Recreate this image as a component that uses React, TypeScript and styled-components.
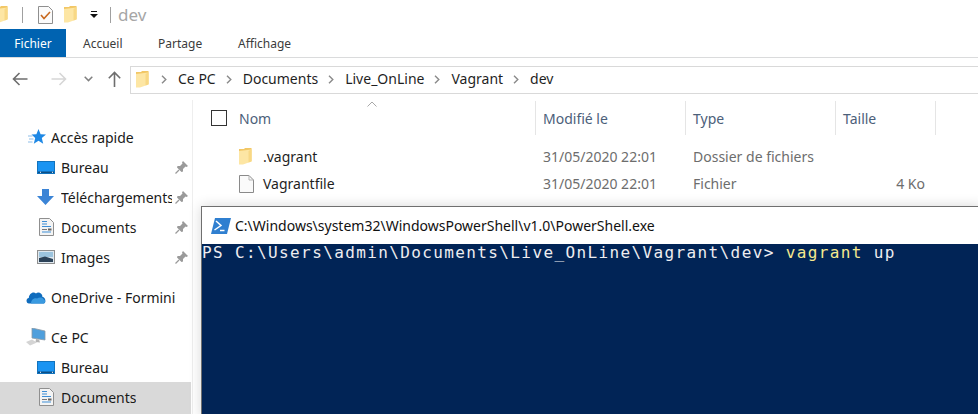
import React from "react";
import styled, { createGlobalStyle } from "styled-components";

const Global = createGlobalStyle`
  html, body { margin: 0; padding: 0; background: #fff; }
  * { box-sizing: border-box; }
`;

const Page = styled.div`
  position: relative;
  width: 978px;
  height: 414px;
  overflow: hidden;
  background: #fff;
  font-family: "Noto Sans", "Open Sans", sans-serif;
  font-size: 14px;
  color: #1a1a1a;
  white-space: nowrap;
`;

/* ---------- title bar ---------- */
const TitleBar = styled.div`
  height: 29px;
  display: flex;
  align-items: center;
  margin-left: -5px;
`;
const TitleSep = styled.span<{ $ml: number }>`
  width: 1px;
  height: 16px;
  background: #a0a0a0;
  margin-left: ${(p) => p.$ml}px;
`;
const QuickSlot = styled.span<{ $ml: number }>`
  display: flex;
  margin-left: ${(p) => p.$ml}px;
`;
const TitleText = styled.span`
  margin-left: 7px;
  font-size: 17px;
  line-height: 20px;
  color: #a6a6a6;
`;

/* ---------- ribbon ---------- */
const Ribbon = styled.div`
  height: 29px;
  display: flex;
  align-items: stretch;
  border-bottom: 1px solid #dadbdc;
  font-size: 12px;
  color: #3b3b3b;
`;
const FileTab = styled.div`
  width: 66px;
  background: #0063b1;
  color: #fff;
  display: flex;
  align-items: center;
  justify-content: center;
`;
const RibbonTab = styled.div<{ $w: number }>`
  width: ${(p) => p.$w}px;
  padding-left: 17px;
  display: flex;
  align-items: center;
`;

/* ---------- navigation ---------- */
const NavRow = styled.div`
  height: 42px;
  display: flex;
  align-items: center;
  padding-left: 12px;
`;
const NavSlot = styled.span<{ $w: number }>`
  width: ${(p) => p.$w}px;
  display: flex;
`;
const AddressBar = styled.div`
  flex: 1;
  height: 28px;
  margin-top: 1px;
  border: 1px solid #d9d9d9;
  border-right: 0;
  display: flex;
  align-items: center;
  padding-left: 5px;
  font-size: 14px;
  color: #1f1f1f;
`;
const Crumb = styled.span`
  margin: 0 10px 2px 11px;
`;
const Chevron = styled.span<{ $ml?: number }>`
  display: flex;
  margin-left: ${(p) => p.$ml ?? 0}px;
`;

/* ---------- body ---------- */
const Body = styled.div`
  display: grid;
  grid-template-columns: 192px 1fr;
`;
const Sidebar = styled.nav`
  padding-top: 22px;
  display: flex;
  flex-direction: column;
  height: 314px;
`;
const NavItem = styled.div<{ $indent: number; $gap?: number; $selected?: boolean }>`
  height: ${(p) => (p.$selected ? 32 : 30)}px;
  flex: none;
  width: 191px;
  margin-top: ${(p) => p.$gap ?? 0}px;
  display: flex;
  align-items: center;
  padding-left: ${(p) => p.$indent}px;
  padding-bottom: ${(p) => (p.$selected ? 2 : 0)}px;
  background: ${(p) => (p.$selected ? "#d9d9d9" : "transparent")};
`;
const NavIcon = styled.span<{ $w: number }>`
  width: ${(p) => p.$w}px;
  flex: none;
  display: flex;
`;
const NavLabel = styled.span<{ $pinned?: boolean }>`
  overflow: hidden;
  width: ${(p) => (p.$pinned ? "111px" : "auto")};
  flex: none;
`;
const Pin = styled.span`
  margin-left: 3px;
  display: flex;
`;

const Main = styled.main`
  border-left: 1px solid #eeeeee;
`;
const Columns = "343px 150px 150px 100px 1fr";
const Header = styled.div`
  display: grid;
  grid-template-columns: ${Columns};
  height: 34px;
  margin-top: 1px;
  color: #4c607a;
  position: relative;
`;
const HeaderCell = styled.div<{ $first?: boolean }>`
  display: flex;
  align-items: center;
  padding-left: ${(p) => (p.$first ? 18 : 7)}px;
  border-right: 1px solid #e5e5e5;
`;
const CheckBox = styled.span`
  width: 16px;
  height: 16px;
  border: 1px solid #333;
  margin-right: 12px;
`;
const SortCaret = styled.span`
  position: absolute;
  left: 174px;
  top: 0;
  display: flex;
`;
const FileRow = styled.div<{ $top: number }>`
  display: grid;
  grid-template-columns: ${Columns};
  height: 27px;
  align-items: center;
  margin-top: ${(p) => p.$top}px;
  color: #6d6d6d;
`;
const NameCell = styled.div`
  display: flex;
  align-items: center;
  padding-left: 46px;
  color: #1f1f1f;
`;
const NameIcon = styled.span`
  width: 24px;
  display: flex;
`;
const DataCell = styled.div`
  padding-left: 7px;
`;
const SizeCell = styled.div`
  text-align: right;
  padding-right: 11px;
`;

/* ---------- PowerShell window ---------- */
const ConsoleWindow = styled.section`
  position: absolute;
  left: 201px;
  top: 206px;
  right: -4px;
  bottom: -4px;
  border: 1px solid #6f6f6f;
  box-shadow: 0 0 12px rgba(0, 0, 0, 0.16);
  background: #fff;
`;
const ConsoleTitle = styled.div`
  height: 37px;
  display: flex;
  align-items: center;
  padding-left: 9px;
  gap: 4px;
  font-size: 14px;
  color: #111;
`;
const ConsoleBody = styled.div`
  height: 170px;
  background: #012456;
  color: #eeedf0;
  font-family: "DejaVu Sans Mono", "Liberation Mono", monospace;
  font-size: 16px;
  letter-spacing: 1.38px;
  line-height: 18px;
`;
const Command = styled.span`
  color: #f5e98f;
`;

/* ---------- drawings ---------- */
const FolderIcon = () => (
  <svg width="13" height="17" viewBox="0 0 13 17">
    <path d="M0 1 L5 1 L6 0 L12.5 0 L12.5 13 L0 13 Z" fill="#f2c766" />
    <path d="M0 3 L12.5 1.5 L12.5 13.5 L4 16.5 L0 16.5 Z" fill="#fde6a4" />
    <path d="M12.5 1 L12.5 13.5 L9.5 14.5 L9.5 3 Z" fill="#f8d885" />
  </svg>
);
const CheckDoc = () => (
  <svg width="15" height="18" viewBox="0 0 15 18">
    <path d="M.5.5 H10.5 L14.5 4.5 V17.5 H.5 Z" fill="#fbfbfb" stroke="#8f8f8f" />
    <path d="M3 9 L6 12.5 L12 6" fill="none" stroke="#c8691f" strokeWidth="1.6" />
  </svg>
);
const Dropdown = () => (
  <svg width="8" height="7" viewBox="0 0 8 7">
    <rect x="1" y="0" width="6" height="1" fill="#111" />
    <path d="M0 3 H8 L4 7 Z" fill="#111" />
  </svg>
);
const ArrowLeft = () => (
  <svg width="16" height="14" viewBox="0 0 16 14">
    <path d="M15.5 7 H1.5 M7.5 1 L1.5 7 L7.5 13" fill="none" stroke="#6e6e6e" strokeWidth="1.6" />
  </svg>
);
const ArrowRight = () => (
  <svg width="16" height="14" viewBox="0 0 16 14">
    <path d="M.5 7 H14.5 M8.5 1 L14.5 7 L8.5 13" fill="none" stroke="#d6d6d6" strokeWidth="1.6" />
  </svg>
);
const SmallDown = () => (
  <svg width="9" height="6" viewBox="0 0 9 6">
    <path d="M.7 .8 L4.5 4.6 L8.3 .8" fill="none" stroke="#808080" strokeWidth="1.5" />
  </svg>
);
const ArrowUp = () => (
  <svg width="13" height="16" viewBox="0 0 13 16">
    <path d="M6.5 16 V1.5 M.8 7.2 L6.5 1.5 L12.2 7.2" fill="none" stroke="#6e6e6e" strokeWidth="1.6" />
  </svg>
);
const CrumbChevron = () => (
  <svg width="6" height="9" viewBox="0 0 6 9">
    <path d="M1 .8 L4.8 4.5 L1 8.2" fill="none" stroke="#8a8a8a" strokeWidth="1.4" />
  </svg>
);
const StarIcon = () => (
  <svg width="18" height="16" viewBox="0 0 18 16">
    <path d="M10.5 0 L12.6 5.2 L18 5.6 L13.8 9.1 L15.2 14.7 L10.5 11.7 L5.8 14.7 L7.2 9.1 L3.5 5.6 L8.4 5.2 Z" fill="#1e88e5" />
    <path d="M0 7 H4.5 M1 10 H5.5 M0 13 H4.5" stroke="#8dbde8" strokeWidth="1" />
  </svg>
);
const DesktopIcon = () => (
  <svg width="18" height="13" viewBox="0 0 18 13">
    <rect x=".5" y=".5" width="17" height="12" fill="#1a94f2" stroke="#1273bd" />
    <rect x="1" y="10.5" width="16" height="1.5" fill="#0d4f86" />
    <rect x="3" y="10.8" width="1" height="1" fill="#fff" />
    <rect x="15" y="10.8" width="1" height="1" fill="#fff" />
  </svg>
);
const DownloadIcon = () => (
  <svg width="17" height="16" viewBox="0 0 17 16">
    <path d="M5 0 H12 V7 H17 L8.5 16 L0 7 H5 Z" fill="#3b84d6" />
  </svg>
);
const DocSvg = styled.svg`
  margin-left: 2px;
`;
const DocIcon = () => (
  <DocSvg width="15" height="18" viewBox="0 0 15 18">
    <path d="M.5.5 H10.5 L14.5 4.5 V17.5 H.5 Z" fill="#f4f4f4" stroke="#8f8f8f" />
    <path d="M3 3.5 H8 M3 6 H8 M3 8.5 H12 M3 14 H12" stroke="#3f8fd6" strokeWidth="1" />
    <path d="M3 11.5 H8" stroke="#777" strokeWidth="1" />
    <rect x="9" y="10.5" width="3.5" height="2" fill="#666" />
  </DocSvg>
);
const ImageIcon = () => (
  <svg width="18" height="14" viewBox="0 0 18 14">
    <rect x=".5" y=".5" width="17" height="13" fill="#dfe8ef" stroke="#8f8f8f" />
    <rect x="2" y="2" width="14" height="5" fill="#9cc4de" />
    <path d="M2 8 L8 6.5 L16 9 V12 H2 Z" fill="#2c4258" />
  </svg>
);
const PinIcon = () => (
  <svg width="13" height="13" viewBox="0 0 13 13">
    <path d="M8 0 L13 5 L11.5 6 L10.5 5.5 L8 8 L8 10.5 L6.5 11 L2 6.5 L2.5 5 L5 5 L7.5 2.5 L7 1.5 Z" fill="#9a9a9a" />
    <path d="M4 9 L0.5 12.5" stroke="#9a9a9a" strokeWidth="1.3" />
  </svg>
);
const CloudIcon = () => (
  <svg width="20" height="13" viewBox="0 0 20 13">
    <path d="M3 12.5 C0 12.5 -.5 7.5 2.8 7 C3 3 7 0 10 2.5 C12 0.5 16.5 2 16.5 6 C19.5 6 21 12.5 17 12.5 Z" fill="#0f6cbd" />
    <path d="M5 12.5 C5 9 8 6.5 11 7.5 C13 6 17 6 17.5 8.2 C19.8 8.8 19.5 12.5 17 12.5 Z" fill="#3a9ae0" />
  </svg>
);
const PcIcon = () => (
  <svg width="20" height="18" viewBox="0 0 20 18">
    <path d="M6 0 L19 3 V12 L6 10 Z" fill="#4f9fdc" stroke="#8c9aa6" strokeWidth=".8" />
    <path d="M13 11.5 L14 14.5 L9.5 14 L10 11 Z" fill="#b5b5b5" />
    <path d="M0 14 L6 11.5 L11 14.5 L4 17.5 Z" fill="#d4d4d4" />
  </svg>
);
const BlankFile = () => (
  <svg width="15" height="18" viewBox="0 0 15 18">
    <path d="M.5.5 H10 L14.5 5 V17.5 H.5 Z" fill="#fafafa" stroke="#8a8a8a" />
    <path d="M10 .5 V5 H14.5" fill="none" stroke="#b5b5b5" />
  </svg>
);
const Caret = () => (
  <svg width="10" height="6" viewBox="0 0 10 6">
    <path d="M.5 5.5 L5 1 L9.5 5.5" fill="none" stroke="#a8a8a8" />
  </svg>
);
const PsIcon = () => (
  <svg width="20" height="16" viewBox="0 0 20 16">
    <path d="M4 0 H20 L16 16 H0 Z" fill="#2f7fd0" />
    <path d="M5 3 L10 7.5 L3.5 12" fill="none" stroke="#fff" strokeWidth="1.5" />
    <path d="M9 12.5 H13.5" stroke="#fff" strokeWidth="1.5" />
  </svg>
);

const quick: [string, React.ReactNode][] = [
  ["Bureau", <DesktopIcon />],
  ["Téléchargements", <DownloadIcon />],
  ["Documents", <DocIcon />],
  ["Images", <ImageIcon />],
];
const crumbs = ["Ce PC", "Documents", "Live_OnLine", "Vagrant", "dev"];

export default function App() {
  return (
    <Page>
      <Global />
      <TitleBar>
        <FolderIcon />
        <TitleSep $ml={14} />
        <QuickSlot $ml={15}><CheckDoc /></QuickSlot>
        <QuickSlot $ml={11}><FolderIcon /></QuickSlot>
        <QuickSlot $ml={13}><Dropdown /></QuickSlot>
        <TitleSep $ml={12} />
        <TitleText>dev</TitleText>
      </TitleBar>
      <Ribbon>
        <FileTab>Fichier</FileTab>
        <RibbonTab $w={75}>Accueil</RibbonTab>
        <RibbonTab $w={80}>Partage</RibbonTab>
        <RibbonTab $w={90}>Affichage</RibbonTab>
      </Ribbon>
      <NavRow>
        <NavSlot $w={39}><ArrowLeft /></NavSlot>
        <NavSlot $w={33}><ArrowRight /></NavSlot>
        <NavSlot $w={24}><SmallDown /></NavSlot>
        <NavSlot $w={22}><ArrowUp /></NavSlot>
        <AddressBar>
          <FolderIcon />
          {crumbs.map((c, i) => (
            <React.Fragment key={c}>
              <Chevron $ml={i === 0 ? 12 : 0}><CrumbChevron /></Chevron>
              <Crumb>{c}</Crumb>
            </React.Fragment>
          ))}
        </AddressBar>
      </NavRow>
      <Body>
        <Sidebar>
          <NavItem $indent={28}>
            <NavIcon $w={23}><StarIcon /></NavIcon>
            <NavLabel>Accès rapide</NavLabel>
          </NavItem>
          {quick.map(([label, icon]) => (
            <NavItem $indent={37} key={label}>
              <NavIcon $w={24}>{icon}</NavIcon>
              <NavLabel $pinned>{label}</NavLabel>
              <Pin><PinIcon /></Pin>
            </NavItem>
          ))}
          <NavItem $indent={26} $gap={10}>
            <NavIcon $w={25}><CloudIcon /></NavIcon>
            <NavLabel>OneDrive - Formini</NavLabel>
          </NavItem>
          <NavItem $indent={26} $gap={10}>
            <NavIcon $w={25}><PcIcon /></NavIcon>
            <NavLabel>Ce PC</NavLabel>
          </NavItem>
          <NavItem $indent={37}>
            <NavIcon $w={24}><DesktopIcon /></NavIcon>
            <NavLabel>Bureau</NavLabel>
          </NavItem>
          <NavItem $indent={37} $selected>
            <NavIcon $w={24}><DocIcon /></NavIcon>
            <NavLabel>Documents</NavLabel>
          </NavItem>
        </Sidebar>
        <Main>
          <Header>
            <SortCaret><Caret /></SortCaret>
            <HeaderCell $first>
              <CheckBox />
              Nom
            </HeaderCell>
            <HeaderCell>Modifié le</HeaderCell>
            <HeaderCell>Type</HeaderCell>
            <HeaderCell>Taille</HeaderCell>
          </Header>
          <FileRow $top={8}>
            <NameCell>
              <NameIcon><FolderIcon /></NameIcon>
              .vagrant
            </NameCell>
            <DataCell>31/05/2020 22:01</DataCell>
            <DataCell>Dossier de fichiers</DataCell>
            <SizeCell />
          </FileRow>
          <FileRow $top={0}>
            <NameCell>
              <NameIcon><BlankFile /></NameIcon>
              Vagrantfile
            </NameCell>
            <DataCell>31/05/2020 22:01</DataCell>
            <DataCell>Fichier</DataCell>
            <SizeCell>4 Ko</SizeCell>
          </FileRow>
        </Main>
      </Body>
      <ConsoleWindow>
        <ConsoleTitle>
          <PsIcon />
          <span>C:\Windows\system32\WindowsPowerShell\v1.0\PowerShell.exe</span>
        </ConsoleTitle>
        <ConsoleBody>
          PS C:\Users\admin\Documents\Live_OnLine\Vagrant\dev&gt; <Command>vagrant</Command> up
        </ConsoleBody>
      </ConsoleWindow>
    </Page>
  );
}
